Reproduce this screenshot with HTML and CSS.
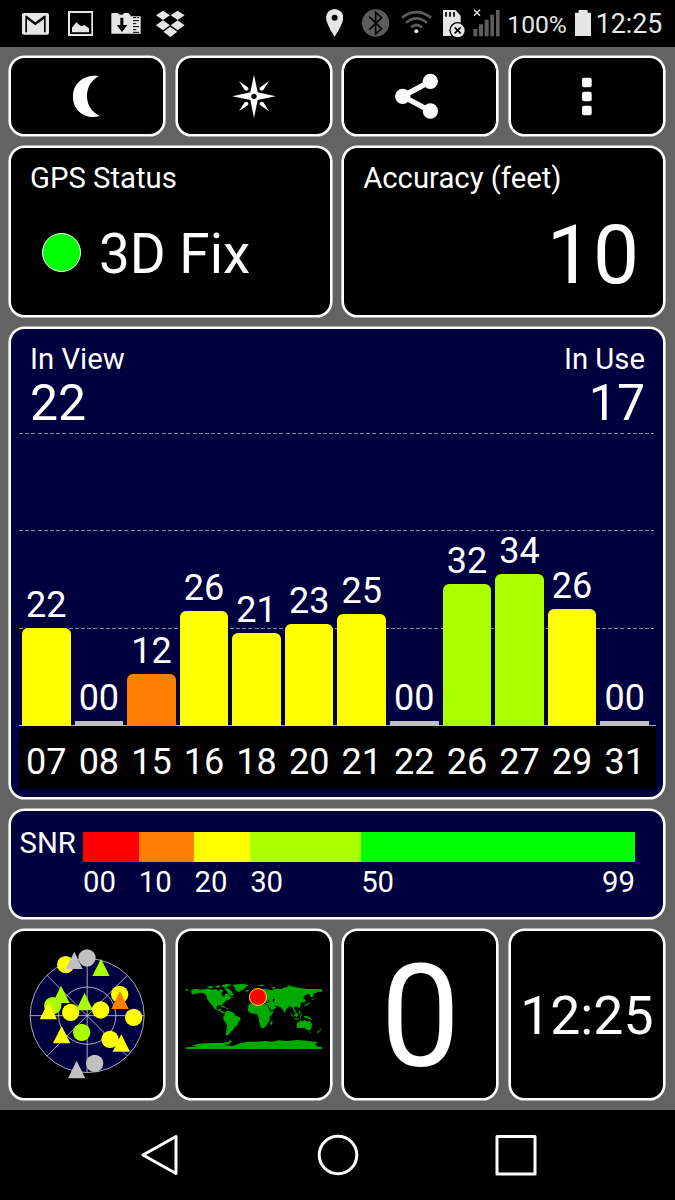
FILE: index.html
```
<!DOCTYPE html>
<html>
<head>
	<meta charset="utf-8">
	<title>GPS Status</title>
	<link rel="stylesheet" href="styles.css">
</head>
<body>

	<div class="statusbar">
		<div class="notifications">
			<svg class="icon-mail" viewBox="66 0 81 141">
				<rect x="66" y="39" width="81" height="65" rx="6"/>
				<path class="cut" d="M76 97V47H80L106 67L132 47H137V97H132V57L106 76L81 57V97Z"/>
			</svg>
			<svg class="icon-image" viewBox="204 0 76 141">
				<rect class="frame" x="207" y="36" width="70" height="69"/>
				<path d="M216 97V83L229 67L243 79L253 75L267 85V97Z"/>
			</svg>
			<svg class="icon-download" viewBox="332 0 90 141">
				<path d="M333 42Q333 39 337 39H352L358 44H366L372 39H384L390 45V49H421V101H333Z"/>
				<path class="cut" d="M360 53H369V75H381L365 96L349 75H360Z"/>
				<path class="cut-line" d="M398 53H408M411 53H416M398 62H416M398 71H408M398 80H416M398 89H408M398 97H416"/>
			</svg>
			<svg class="icon-dropbox" viewBox="469 0 88 141">
				<path d="M490 32L511 46L490 60L469 46ZM534 32L555 46L534 60L513 46ZM490 61L511 76L490 91L469 76ZM534 61L555 76L534 91L513 76ZM512 80L533 95L512 111L491 95Z"/>
			</svg>
		</div>

		<div class="system">
			<svg class="icon-pin" viewBox="17 0 52 141">
				<path d="M43 110Q17 70 17 53A26 26 0 0 1 69 53Q69 70 43 110Z"/>
				<circle class="cut" cx="43" cy="53" r="9"/>
			</svg>
			<svg class="icon-bluetooth dim" viewBox="126 0 82 141">
				<circle cx="167" cy="69" r="41"/>
				<path class="rune" d="M148 50L185 86L167 102V37L185 53L148 89"/>
			</svg>
			<svg class="icon-wifi dim" viewBox="245 0 93 141">
				<path class="wave" d="M248 53Q291 20 335 53M260 68Q291 42 323 68M275 82Q291 68 308 82"/>
				<circle class="lit" cx="291" cy="94" r="6"/>
			</svg>
			<svg class="icon-sd" viewBox="371 0 66 141">
				<path d="M371 30H408L424 47V108H371Z"/>
				<path class="cut-thick" d="M380 36V50M392 36V50M404 36V50"/>
				<circle class="cut" cx="415" cy="91" r="25"/>
				<circle cx="415" cy="91" r="21"/>
				<path class="cross" d="M406 82L424 100M424 82L406 100"/>
			</svg>
			<svg class="icon-signal dim" viewBox="458 0 81 141">
				<path d="M459 87H471V109H459ZM476 73H488V109H476ZM493 59H505V109H493ZM510 44H521V109H510ZM527 30H538V109H527Z"/>
				<path class="nosim" d="M461 29L479 47M479 29L461 47"/>
			</svg>
			<span class="percent">100%</span>
			<svg class="icon-battery" viewBox="765 0 49 141">
				<path d="M765 38H776V30H803V38H814V108H765Z"/>
			</svg>
			<span class="clock">12:25</span>
		</div>
	</div>

	<div class="panel">

		<a href="#" class="card button">
			<svg viewBox="184 168 156 240">
				<path d="M297 229C268 222 220 240 220 290C220 338 264 359 300 348C276 335 262 315 262 288C262 262 275 240 297 229Z"/>
			</svg>
		</a>
		<a href="#" class="card button">
			<svg viewBox="683 168 156 240">
				<path d="M761 224L772 277L826 289L772 300L761 354L750 300L696 289L750 277Z"/>
				<path d="M716 243L744 263L744 269L738 272L733 270ZM806 243L778 263L778 269L784 272L789 270ZM716 334L744 314L744 308L738 305L733 307ZM806 334L778 314L778 308L784 305L789 307Z"/>
				<circle class="cut" cx="761" cy="289" r="8"/>
			</svg>
		</a>
		<a href="#" class="card button">
			<svg viewBox="225 168 156 240">
				<path class="share-line" d="M334 244L251 289L334 333"/>
				<circle cx="334" cy="244" r="23"/>
				<circle cx="251" cy="289" r="23"/>
				<circle cx="334" cy="333" r="23"/>
			</svg>
		</a>
		<a href="#" class="card button">
			<svg viewBox="723 168 156 240">
				<rect x="786" y="233" width="29" height="29" rx="6"/>
				<rect x="786" y="275" width="29" height="29" rx="6"/>
				<rect x="786" y="317" width="29" height="29" rx="6"/>
			</svg>
		</a>

		<div class="card half">
			<div class="label">GPS Status</div>
			<div class="fix"><span class="fix-dot"></span>3D Fix</div>
		</div>
		<div class="card half">
			<div class="label">Accuracy (feet)</div>
			<div class="accuracy">10</div>
		</div>

		<div class="card satellites">
			<div class="counts">
				<div>
					<div class="label">In View</div>
					<div class="count">22</div>
				</div>
				<div class="in-use">
					<div class="label">In Use</div>
					<div class="count">17</div>
				</div>
			</div>
			<div class="chart">
				<div class="bars">
					<div class="col">22<i class="yellow" style="height: 97.5px"></i></div>
					<div class="col">00<i class="none" style="height: 4.5px"></i></div>
					<div class="col">12<i class="orange" style="height: 52px"></i></div>
					<div class="col">26<i class="yellow" style="height: 115px"></i></div>
					<div class="col">21<i class="yellow" style="height: 92.5px"></i></div>
					<div class="col">23<i class="yellow" style="height: 102px"></i></div>
					<div class="col">25<i class="yellow" style="height: 112px"></i></div>
					<div class="col">00<i class="none" style="height: 4.5px"></i></div>
					<div class="col">32<i class="lime" style="height: 141.5px"></i></div>
					<div class="col">34<i class="lime" style="height: 151.5px"></i></div>
					<div class="col">26<i class="yellow" style="height: 117px"></i></div>
					<div class="col">00<i class="none" style="height: 4.5px"></i></div>
				</div>
				<div class="axis">
					<span>07</span><span>08</span><span>15</span><span>16</span><span>18</span><span>20</span><span>21</span><span>22</span><span>26</span><span>27</span><span>29</span><span>31</span>
				</div>
			</div>
		</div>

		<div class="card snr">
			<div class="snr-name">SNR</div>
			<div class="scale">
				<div class="red"></div>
				<div class="orange"></div>
				<div class="yellow"></div>
				<div class="lime"></div>
				<div class="green"></div>
				<span>00</span>
				<span>10</span>
				<span>20</span>
				<span>30</span>
				<span class="last">50 <b>99</b></span>
			</div>
		</div>

		<div class="card tile">
			<svg class="sky" viewBox="55 70 354 400">
				<circle class="disc" cx="232.500" cy="270" r="171"/>
				<path class="grid" d="M61 270H404M232.500 99V441M112 149L353 391M353 149L112 391"/>
				<circle class="grid" cx="232.500" cy="270" r="86"/>
				<circle class="f-yellow" cx="168" cy="117" r="26"/>
				<circle class="f-grey" cx="232" cy="97" r="26"/>
				<path class="f-grey" d="M194 78L219 130H168Z"/>
				<path class="f-lime" d="M274 99L300 151H248Z"/>
				<circle class="f-yellow" cx="330" cy="206" r="26"/>
				<path class="f-orange" d="M331 195L357 250H305Z"/>
				<path class="f-lime" d="M154 180L180 232H129Z"/>
				<circle class="f-lime" cx="129" cy="240" r="26"/>
				<path class="f-yellow" d="M116 229L142 281H90Z"/>
				<circle class="f-yellow" cx="183" cy="260" r="26"/>
				<path class="f-lime" d="M225 202L250 254H199Z"/>
				<circle class="f-yellow" cx="273" cy="253" r="26"/>
				<circle class="f-yellow" cx="372" cy="275" r="26"/>
				<circle class="f-lime" cx="216" cy="320" r="26"/>
				<path class="f-yellow" d="M156 301L182 353H130Z"/>
				<circle class="f-yellow" cx="301" cy="341" r="26"/>
				<path class="f-yellow" d="M335 326L361 378H309Z"/>
				<path class="f-grey" d="M201 405L227 458H175Z"/>
				<circle class="f-grey" cx="255" cy="413" r="26"/>
			</svg>
		</div>
		<div class="card tile">
			<svg class="world" viewBox="30 170 412 206">
				<!-- americas -->
				<path d="M48 195L60 190L78 193L96 190L112 193L124 191L131 198L138 191L145 197L139 205L143 212L149 214L150 206L158 205L164 212L170 216L165 222L155 225L149 231L142 237L140 246L136 239L126 241L124 249L129 254L136 249L139 256L145 259L149 263L143 264L132 257L119 251L112 241L104 232L97 222L94 211L88 205L76 202L66 204L52 208L49 202Z"/>
				<path d="M150 260L158 256L170 259L177 264L182 271L195 276L197 281L191 290L187 301L179 305L175 313L167 319L162 326L157 331L152 328L154 316L156 298L147 286L144 276L149 269Z"/>
				<path d="M95 185L106 182L117 185L105 190ZM120 183L132 180L137 185L127 188ZM141 179L155 176L172 178L160 183L151 188L143 185ZM147 190L158 188L170 198L176 210L171 213L160 205L155 197ZM172 179L190 177L204 175L221 180L213 185L207 192L197 196L190 201L183 195L180 187ZM211 195L221 194L221 198L212 199ZM138 240L146 243L153 246L148 248L140 244ZM153 248L162 250L160 253L154 251ZM30 190L41 193L39 197L32 195ZM170 216L177 214L175 219Z"/>
				<!-- europe and asia -->
				<path d="M225 229L222 218L231 216L235 206L246 196L256 192L268 190L281 193L291 194L305 190L318 191L326 187L346 183L365 186L380 189L398 191L417 191L441 192L441 199L428 200L423 204L415 203L415 214L407 216L404 207L398 207L387 211L386 220L393 225L388 232L381 230L376 236L377 243L370 250L368 243L360 244L356 248L362 255L363 263L356 257L353 247L343 243L334 252L329 264L322 250L314 244L301 241L297 237L300 243L305 245L299 251L286 256L279 242L275 235L267 231L258 230L251 229L242 226L231 229Z"/>
				<path d="M226 234L237 234L249 233L258 236L270 237L277 240L282 251L287 259L297 258L289 270L283 275L284 286L278 293L274 302L266 309L258 307L253 291L251 275L245 265L231 265L220 259L218 249L221 240Z"/>
				<path d="M293 284L292 295L287 300L285 293ZM249 179L267 178L265 183L252 182ZM290 187L300 184L303 187L294 191ZM337 180L350 181L347 184L338 184ZM388 239L397 236L402 231L406 234L397 240L389 243ZM409 225L417 218L422 214L414 224ZM371 253L376 258L377 266L382 269L379 272L372 264ZM345 260L352 268L357 276L351 273ZM358 267L365 261L370 268L366 275L359 273ZM356 278L372 280L370 283L357 281ZM374 270L380 277L376 280ZM385 272L397 272L408 279L411 285L402 280L390 278Z"/>
				<path d="M366 293L376 286L384 287L389 284L394 287L399 290L402 283L406 290L411 297L410 307L404 316L395 313L388 307L377 308L367 309L365 301ZM401 319L408 319L404 323ZM434 308L439 313L435 317ZM426 320L434 314L433 320L427 324Z"/>
				<path class="sea" d="M278 225L283 223L283 230ZM294 220L299 222L297 230L293 227ZM273 229L281 229L282 232L273 232ZM277 240L279 240L288 254L286 256Z"/>
				<!-- antarctica -->
				<path d="M32 366L67 364L51 361L65 357L84 354L116 353L140 352L160 350L167 343L170 348L164 356L146 359L174 362L195 354L218 349L244 349L274 347L292 349L309 345L338 347L364 344L393 346L418 349L429 349L421 357L425 363L441 365V371H32Z"/>
				<circle class="here" cx="249" cy="215" r="25.500"/>
			</svg>
		</div>
		<div class="card tile speed">0</div>
		<div class="card tile time">12:25</div>

	</div>

	<div class="navbar">
		<svg viewBox="0 0 44 44"><path d="M38 3.500V40.500L5 22Z"/></svg>
		<svg viewBox="0 0 44 44"><circle cx="22" cy="22" r="18.800"/></svg>
		<svg viewBox="0 0 44 44"><rect x="3" y="3.500" width="38" height="37.500"/></svg>
	</div>

</body>
</html>
```
FILE: styles.css
```
* {
	box-sizing: border-box;
}

body {
	margin: 0;
	width: 675px;
	height: 1200px;
	background: #000;
	color: #fff;
	font-family: Roboto, "Liberation Sans", sans-serif;
	font-size: 29.3px;
	overflow: hidden;
}

svg {
	display: block;
	fill: #fff;
}

.cut {
	fill: #000;
}

/* status bar */

.statusbar {
	height: 47px;
	padding: 0 11px 0 22px;
	display: flex;
	justify-content: space-between;
	color: #e6e6e6;
}

.statusbar svg {
	height: 47px;
	flex: none;
	fill: #e6e6e6;
}

.notifications, .system {
	display: flex;
}

.statusbar .cut {
	fill: #000;
}

.cut-line, .cut-thick {
	fill: none;
	stroke: #000;
	stroke-width: 3;
}

.cut-thick {
	stroke-width: 5;
}

.icon-mail {
	width: 27px;
}

.icon-image {
	width: 25.3px;
	margin-left: 19px;
}

.frame {
	fill: none;
	stroke: #e6e6e6;
	stroke-width: 6;
}

.icon-download {
	width: 30px;
	margin-left: 17.3px;
}

.icon-dropbox {
	width: 29.3px;
	margin-left: 15.7px;
}

.icon-pin {
	width: 17.3px;
}

.icon-bluetooth {
	width: 27.3px;
	margin-left: 19px;
}

.statusbar .dim {
	fill: #5c5c5c;
}

.rune {
	fill: none;
	stroke: #000;
	stroke-width: 5;
}

.icon-wifi {
	width: 31px;
	margin-left: 12.3px;
}

.wave {
	fill: none;
	stroke: #5c5c5c;
	stroke-width: 8;
}

.statusbar .lit {
	fill: #e6e6e6;
}

.icon-sd {
	width: 22px;
	margin-left: 11px;
}

.cross {
	stroke: #000;
	stroke-width: 5;
}

.icon-signal {
	width: 27px;
	margin-left: 7.6px;
}

.nosim {
	stroke: #e6e6e6;
	stroke-width: 4;
}

.percent {
	width: 67.4px;
	margin-left: 7.3px;
	font-size: 24.6px;
	line-height: 50px;
}

.icon-battery {
	width: 16.3px;
}

.clock {
	width: 73px;
	padding-left: 4.7px;
	font-size: 26.8px;
	line-height: 49px;
}

/* panel */

.panel {
	height: 1063px;
	padding: 8.5px 9.5px 8.5px 8.5px;
	background: #636363;
	display: grid;
	grid-template-columns: repeat(4, 1fr);
	grid-template-rows: 81px 171.5px 473px 111px 172.500px;
	gap: 9px 9.300px;
}

.card {
	margin: 0.5px;
	border: 2px solid #fff;
	border-radius: 15.5px;
	box-shadow: 0 0 0 0.6px #fff;
	background: #000;
	overflow: hidden;
}

.button {
	display: flex;
	align-items: center;
	justify-content: center;
}

.button svg {
	width: 52px;
	height: 80px;
}

.share-line {
	fill: none;
	stroke: #fff;
	stroke-width: 16;
}

.half {
	grid-column: span 2;
	padding: 14.5px 18px 0 19px;
}

.label {
	line-height: 30px;
}

.fix {
	margin-top: 31px;
	display: flex;
	align-items: center;
	font-size: 54.8px;
	line-height: 60px;
}

.fix-dot {
	width: 39px;
	height: 39px;
	margin: -3px 18px 0 12px;
	border: 1px solid #fff;
	border-radius: 50%;
	background: #0f0;
}

.accuracy {
	margin: 17px 6px 0 0;
	font-size: 82px;
	line-height: 90px;
	text-align: right;
}

.satellites, .snr {
	grid-column: span 4;
	background: #00003f;
}

.counts {
	height: 104.5px;
	padding: 15px 18px 0 19px;
	display: flex;
	justify-content: space-between;
}

.in-use {
	text-align: right;
}

.count {
	margin-top: 3px;
	font-size: 50px;
	line-height: 52px;
}

.chart {
	margin: 0 7px 0 8px;
}

.bars {
	position: relative;
	height: 293px;
	padding: 0 5px 0 1px;
	display: flex;
	align-items: flex-end;
	border-bottom: 1px solid #b0b0b0;
}

/* dashed lines every 20 dB */
.bars::before {
	content: "";
	position: absolute;
	top: 0;
	left: 0;
	right: 2px;
	bottom: 2px;
	background:
		repeating-linear-gradient(to right, transparent 0 4px, #00003f 4px 6.200px),
		repeating-linear-gradient(to bottom, #8989a8 0 1px, transparent 1px 97.300px);
}

.col {
	position: relative;
	top: 0.6px;
	flex: 1;
	font-size: 36px;
	line-height: 40px;
	text-align: center;
}

.col i {
	display: block;
	margin: 3px 2px 0;
	border-radius: 6px 6px 0 0;
}

.col .none {
	border-radius: 0;
	background: #c0c0c0;
}

.axis {
	height: 63px;
	padding: 4.5px 5px 0 1px;
	display: flex;
	background: #000;
	font-size: 36px;
	line-height: 62px;
	text-align: center;
}

.axis span {
	flex: 1;
}

.red { background: #f00; }
.orange { background: #ff8000; }
.yellow { background: #ff0; }
.lime { background: #af0; }
.green { background: #0f0; }

.snr {
	padding: 21px 28px 0 8.5px;
	display: flex;
}

.snr-name {
	width: 63.600px;
	line-height: 22px;
}

.scale {
	flex: 1;
	display: grid;
	grid-template-columns: 55.700px 55.700px 55.700px 111px 1fr;
	grid-template-rows: 30px 40px;
	line-height: 41px;
}

.last {
	display: flex;
	justify-content: space-between;
}

.last b {
	font-weight: normal;
}

/* bottom tiles */

.tile {
	padding-top: 2px;
	display: flex;
	align-items: center;
	justify-content: center;
}

.sky {
	width: 118px;
	height: 133.300px;
}

.disc {
	fill: #00003f;
	stroke: #c8c8d0;
	stroke-width: 2.500;
}

.grid {
	fill: none;
	stroke: #c8c8d0;
	stroke-width: 2.500;
}

.f-yellow { fill: #ff0; }
.f-lime { fill: #af0; }
.f-orange { fill: #ff8000; }
.f-grey { fill: #c0c0c0; }

.world {
	width: 137.300px;
	height: 68.700px;
	margin-top: 2px;
	fill: #00aa00;
}

.sea {
	fill: #000;
}

.here {
	fill: #f00;
	stroke: #ffd800;
	stroke-width: 3;
}

.speed {
	font-size: 142px;
	padding-top: 6px;
}

.time {
	font-size: 53.5px;
	padding-top: 3px;
}

/* navigation bar */

.navbar {
	height: 90px;
	padding: 0 137.5px;
	display: flex;
	align-items: center;
	justify-content: space-between;
}

.navbar svg {
	width: 44px;
	height: 44px;
	fill: none;
	stroke: #fff;
	stroke-width: 3;
	stroke-linejoin: round;
}
```
